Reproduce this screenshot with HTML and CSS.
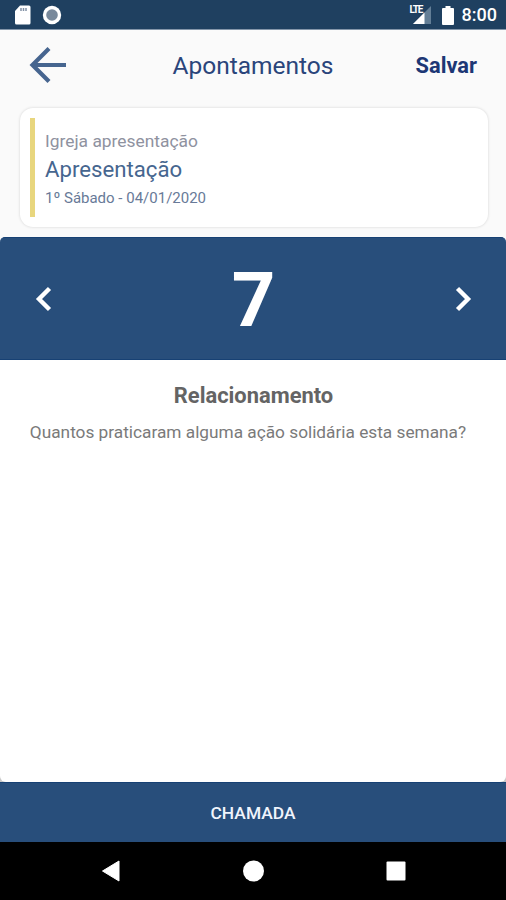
FILE: index.html
```html
<!DOCTYPE html>
<html lang="pt-BR">
<head>
    <meta charset="UTF-8">
    <meta name="viewport" content="width=device-width, initial-scale=1.0">
    <title>Apontamentos</title>
    <link rel="stylesheet" href="styles.css">
</head>
<body>

<div class="screen">
    <div class="status-bar">
        <div class="status-left">
            <svg width="17" height="20" viewBox="0 0 17 20">
                <path d="M6 .5h9q1.500 0 1.500 1.500v16q0 1.500-1.500 1.500H2.500Q1 19.500 1 18V6z" fill="#fff"/>
                <path d="M7 3v3M9.500 3v3M12 3v3" stroke="#8291a5" stroke-width="1.500"/>
            </svg>
            <svg width="20" height="20" viewBox="0 0 20 20">
                <circle cx="10" cy="10" r="9.200" fill="#fff"/>
                <circle cx="10" cy="10" r="5.800" fill="#78899b"/>
            </svg>
        </div>
        <div class="status-right">
            <div class="signal">
                <svg width="24" height="20" viewBox="0 0 24 20">
                    <path d="M4 19 22 1v18z" fill="#637e96"/>
                    <path d="M4 19 15.500 7.500V19z" fill="#fff"/>
                </svg>
                <span class="network">LTE</span>
            </div>
            <svg class="battery" width="12" height="19" viewBox="0 0 12 19">
                <path d="M3.500 0h5v2H11q1 0 1 1v15q0 1-1 1H1q-1 0-1-1V3q0-1 1-1h2.500z" fill="#fff"/>
            </svg>
            <span class="clock">8:00</span>
        </div>
    </div>

    <div class="header">
        <button class="back" aria-label="Voltar">
            <svg width="38" height="38" viewBox="0 0 38 38">
                <path d="M20 2.500 3.500 19 20 35.500M3.500 19h33.500" fill="none" stroke="#46658f" stroke-width="4.200"/>
            </svg>
        </button>
        <h1>Apontamentos</h1>
        <button class="save">Salvar</button>
    </div>

    <div class="card">
        <div class="card-mark"></div>
        <div class="card-text">
            <div class="church">Igreja apresentação</div>
            <div class="group">Apresentação</div>
            <div class="date">1º Sábado - 04/01/2020</div>
        </div>
    </div>

    <div class="counter">
        <button class="arrow" aria-label="Anterior">
            <svg width="17" height="26" viewBox="0 0 17 26">
                <path d="M14.500 2.500 4 13l10.500 10.500" fill="none" stroke="#fff" stroke-width="4.400"/>
            </svg>
        </button>
        <div class="number">7</div>
        <button class="arrow" aria-label="Próximo">
            <svg width="17" height="26" viewBox="0 0 17 26">
                <path d="M2.500 2.500 13 13 2.500 23.500" fill="none" stroke="#fff" stroke-width="4.400"/>
            </svg>
        </button>
    </div>

    <div class="content">
        <h2>Relacionamento</h2>
        <p>Quantos praticaram alguma ação solidária esta semana?</p>
    </div>

    <button class="call-button">CHAMADA</button>

    <div class="nav-bar">
        <svg width="22" height="22" viewBox="0 0 22 22"><path d="M2.500 11 19 1v20z" fill="#fff" stroke="#fff"/></svg>
        <svg width="22" height="22" viewBox="0 0 22 22"><circle cx="10.500" cy="11" r="10.500" fill="#fff"/></svg>
        <svg width="22" height="22" viewBox="0 0 22 22"><rect x="1.500" y="1.500" width="19" height="19" rx="1" fill="#fff"/></svg>
    </div>
</div>

</body>
</html>
```

FILE: styles.css
```css
* {
    box-sizing: border-box;
}
body {
    margin: 0;
    font-family: Roboto, "Liberation Sans", sans-serif;
    background-color: #fafafa;
}
button {
    padding: 0;
    border: none;
    background: none;
    font-family: inherit;
    cursor: pointer;
}
svg {
    display: block;
}
.screen {
    display: flex;
    flex-direction: column;
    height: 900px;
    overflow: hidden;
    background: linear-gradient(#fafafa 700px, #c8c8c8 700px);
}
.status-bar {
    display: flex;
    justify-content: space-between;
    align-items: center;
    height: 30px;
    padding: 1px 9px 0 14px;
    background-color: #1f4060;
    border-bottom: 1px solid #8496aa;
}
.status-left {
    display: flex;
    gap: 11px;
}
.status-right {
    display: flex;
    align-items: center;
}
.signal {
    position: relative;
    margin-right: 9px;
}
.network {
    position: absolute;
    top: 0;
    left: 1px;
    color: #fff;
    font-size: 10px;
    line-height: 9px;
    font-weight: 700;
    letter-spacing: -1.2px;
}
.battery {
    margin-right: 8px;
}
.clock {
    color: #fff;
    font-size: 18px;
    font-weight: 500;
    line-height: 20px;
}
.header {
    display: grid;
    grid-template-columns: 90px 1fr 90px;
    align-items: center;
    height: 78px;
    padding: 0 29px 8px;
}
h1 {
    margin: 0;
    color: #2a457b;
    font-size: 24.5px;
    font-weight: 400;
    text-align: center;
}
.save {
    color: #1d3775;
    font-size: 21.8px;
    font-weight: 700;
    text-align: right;
}
.card {
    display: flex;
    gap: 10px;
    height: 119px;
    margin: 0 18px 10px 20px;
    padding: 10px;
    background-color: #fff;
    border-radius: 13px;
    box-shadow: 0 0 3px rgba(0, 0, 0, 0.16);
}
.card-mark {
    width: 5px;
    height: 99px;
    background-color: #e8d67e;
}
.card-text {
    padding-top: 12px;
}
.church {
    color: #8f929f;
    font-size: 17.4px;
    line-height: 22px;
}
.group {
    padding-top: 1px;
    color: #46668f;
    font-size: 22.2px;
    line-height: 32px;
}
.date {
    color: #687a98;
    font-size: 15px;
    line-height: 26px;
}
.counter {
    display: flex;
    justify-content: space-between;
    align-items: center;
    height: 123px;
    padding: 0 34px 0 35px;
    background-color: #284e7b;
    border-top: 1px solid #174174;
    border-bottom: 1px solid #174174;
    border-radius: 5px 5px 0 0;
}
.number {
    padding-top: 3px;
    color: #fff;
    font-size: 76px;
    font-weight: 700;
    line-height: 88px;
}
.content {
    height: 422px;
    padding-top: 22px;
    background-color: #fff;
    border-radius: 0 0 6px 6px;
    text-align: center;
}
h2 {
    margin: 0;
    padding-left: 1px;
    color: #646464;
    font-size: 21.9px;
    font-weight: 700;
    line-height: 28px;
}
p {
    margin: 10px 0 0;
    padding-right: 10px;
    color: #7a7a7a;
    font-size: 17.25px;
    line-height: 24px;
    white-space: nowrap;
}
.call-button {
    height: 60px;
    background-color: #284e7b;
    border-top: 1px solid #174174;
    color: #f0f4fc;
    font-size: 17.4px;
    font-weight: 500;
}
.nav-bar {
    display: flex;
    justify-content: space-between;
    align-items: center;
    height: 58px;
    padding: 0 99px 0 100px;
    background-color: #000;
}
```
